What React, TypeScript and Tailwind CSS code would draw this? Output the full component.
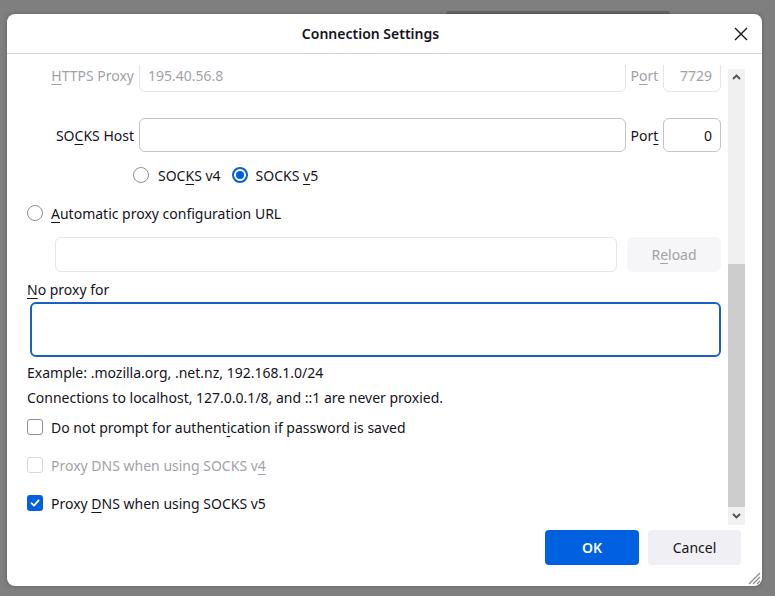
import React from 'react';

const Key: React.FC<{ children: React.ReactNode }> = ({ children }) => (
  <span className="underline underline-offset-[3px] decoration-[1px]">{children}</span>
);

const Radio: React.FC<{ checked?: boolean }> = ({ checked }) =>
  checked ? (
    <span className="w-4 h-4 shrink-0 rounded-full border-2 border-[#0061e0] bg-white flex items-center justify-center">
      <span className="w-[8px] h-[8px] rounded-full bg-[#0061e0]" />
    </span>
  ) : (
    <span className="w-4 h-4 shrink-0 rounded-full border border-[#8f8f9d] bg-white" />
  );

const Checkbox: React.FC<{ checked?: boolean; disabled?: boolean }> = ({ checked, disabled }) =>
  checked ? (
    <span className="w-4 h-4 shrink-0 rounded-[3px] bg-[#0061e0] flex items-center justify-center">
      <svg width="12" height="12" viewBox="0 0 12 12" fill="none">
        <path d="M2.5 6.2 L5 8.6 L9.6 3.4" stroke="white" strokeWidth="1.8" strokeLinecap="round" strokeLinejoin="round" />
      </svg>
    </span>
  ) : (
    <span
      className={`w-4 h-4 shrink-0 rounded-[3px] border bg-white ${
        disabled ? 'border-[#d6d6dc]' : 'border-[#8f8f9d]'
      }`}
    />
  );

const ProxyRow: React.FC<{
  label: React.ReactNode;
  value: string;
  port: string;
  portLabel: React.ReactNode;
  disabled?: boolean;
}> = ({ label, value, port, portLabel, disabled }) => {
  const border = disabled ? 'border-[#e6e6ea]' : 'border-[#c2c2c8]';
  const text = disabled ? 'text-[#a2a2a8]' : 'text-[#15141a]';
  return (
    <div className="flex items-center h-[34px]">
      <div className={`w-[107px] text-right leading-[12px] pt-[2px] ${text}`}>{label}</div>
      <div className={`ml-[5px] w-[487px] h-[34px] rounded-[6px] border ${border} flex items-center pl-[8px] pt-[2px] leading-[12px] ${text}`}>
        {value}
      </div>
      <div className={`w-[37px] text-center leading-[12px] pt-[2px] ${text}`}>{portLabel}</div>
      <div className={`w-[58px] h-[34px] rounded-[6px] border ${border} flex items-center justify-end pr-[8px] pt-[2px] leading-[12px] ${text}`}>
        {port}
      </div>
    </div>
  );
};

export default function App() {
  return (
    <div className="relative w-[775px] h-[596px] bg-[#7f7f7f] pt-[14px] pl-[7px] overflow-hidden font-['Noto_Sans','Open_Sans',sans-serif] text-[14px] text-[#15141a]">
      <div className="absolute left-[446px] top-[11px] w-[224px] h-[3px] rounded-t-[3px] bg-[#666666]" />
      <div className="relative w-[755px] h-[572px] bg-white rounded-[8px] flex flex-col shadow-[0_0_4px_rgba(0,0,0,0.25)]">
        {/* header */}
        <div className="h-[40px] flex items-center border-b border-[#d4d4d8] pl-[8px] pr-[6px]">
          <div className="flex-1 text-center font-semibold">Connection Settings</div>
          <button className="w-[30px] h-[30px] flex items-center justify-center">
            <svg width="14" height="14" viewBox="0 0 14 14">
              <path d="M1 1 L13 13 M13 1 L1 13" stroke="#15141a" strokeWidth="1.4" />
            </svg>
          </button>
        </div>

        {/* body */}
        <div className="flex-1 flex pt-[11px] pl-[20px]">
          <div className="w-[701px] h-[460px] overflow-hidden pr-[7px]">
            <div className="-mt-[7px] flex flex-col">
              <ProxyRow
                disabled
                label={
                  <>
                    <Key>H</Key>TTPS Proxy
                  </>
                }
                value="195.40.56.8"
                portLabel={
                  <>
                    P<Key>o</Key>rt
                  </>
                }
                port="7729"
              />
              <div className="mt-[26px]">
                <ProxyRow
                  label={
                    <>
                      SO<Key>C</Key>KS Host
                    </>
                  }
                  value=""
                  portLabel={
                    <>
                      Por<Key>t</Key>
                    </>
                  }
                  port="0"
                />
              </div>

              <div className="mt-[13px] h-[20px] flex items-center pl-[106px]">
                <Radio />
                <span className="ml-[9px]">
                  SOC<Key>K</Key>S v4
                </span>
                <span className="ml-[11px]">
                  <Radio checked />
                </span>
                <span className="ml-[8px]">
                  SOCKS <Key>v</Key>5
                </span>
              </div>

              <div className="mt-[18px] h-[20px] flex items-center">
                <Radio />
                <span className="ml-[8px]">
                  <Key>A</Key>utomatic proxy configuration URL
                </span>
              </div>

              <div className="mt-[14px] h-[35px] flex">
                <div className="ml-[28px] w-[562px] h-[35px] rounded-[6px] border border-[#e6e6ea]" />
                <div className="ml-[10px] w-[94px] h-[35px] rounded-[6px] bg-[#f6f6f8] flex items-center justify-center text-[#a2a2a8]">
                  R<Key>e</Key>load
                </div>
              </div>

              <div className="mt-[7px] h-[20px] flex items-center">
                <span>
                  <Key>N</Key>o proxy for
                </span>
              </div>
              <div className="mt-[3px] ml-[3px] w-[691px] h-[55px] rounded-[6px] border-2 border-[#1a5fc8]" />

              <div className="mt-[5px] h-[20px] flex items-center">Example: .mozilla.org, .net.nz, 192.168.1.0/24</div>
              <div className="mt-[5px] h-[20px] flex items-center">
                Connections to localhost, 127.0.0.1/8, and ::1 are never proxied.
              </div>

              <div className="mt-[10px] h-[20px] flex items-center">
                <Checkbox />
                <span className="ml-[8px]">
                  Do not prompt for authent<Key>i</Key>cation if password is saved
                </span>
              </div>
              <div className="mt-[18px] h-[20px] flex items-center">
                <Checkbox disabled />
                <span className="ml-[8px] text-[#a2a2a8]">
                  Proxy DNS when using SOCKS v<Key>4</Key>
                </span>
              </div>
              <div className="mt-[18px] h-[20px] flex items-center">
                <Checkbox checked />
                <span className="ml-[8px]">
                  Proxy <Key>D</Key>NS when using SOCKS v5
                </span>
              </div>
            </div>
          </div>

          {/* scrollbar */}
          <div className="mt-[4px] w-[17px] h-[456px] bg-[#f0f0f0] flex flex-col">
            <div className="h-[16px] flex items-center justify-center">
              <svg width="9" height="6" viewBox="0 0 9 6">
                <path d="M1 5 L4.5 1.5 L8 5" stroke="#505050" strokeWidth="1.8" fill="none" />
              </svg>
            </div>
            <div className="mt-[179px] h-[243px] bg-[#cdcdcd]" />
            <div className="h-[18px] flex items-center justify-center">
              <svg width="9" height="6" viewBox="0 0 9 6">
                <path d="M1 1 L4.5 4.5 L8 1" stroke="#505050" strokeWidth="1.8" fill="none" />
              </svg>
            </div>
          </div>
        </div>

        {/* footer */}
        <div className="h-[60px] flex justify-end items-start pt-[4px] pr-[21px] gap-[9px]">
          <button className="w-[94px] h-[35px] rounded-[4px] bg-[#0061e0] text-white font-semibold">OK</button>
          <button className="w-[93px] h-[35px] rounded-[4px] bg-[#f0f0f4] text-[#15141a]">Cancel</button>
        </div>

        <svg className="absolute right-[1px] bottom-[1px]" width="15" height="15" viewBox="0 0 15 15">
          <path d="M14 3 L3 14 M14 7 L7 14 M14 11 L11 14" stroke="#8a8a8a" strokeWidth="1.2" />
        </svg>
      </div>
    </div>
  );
}
